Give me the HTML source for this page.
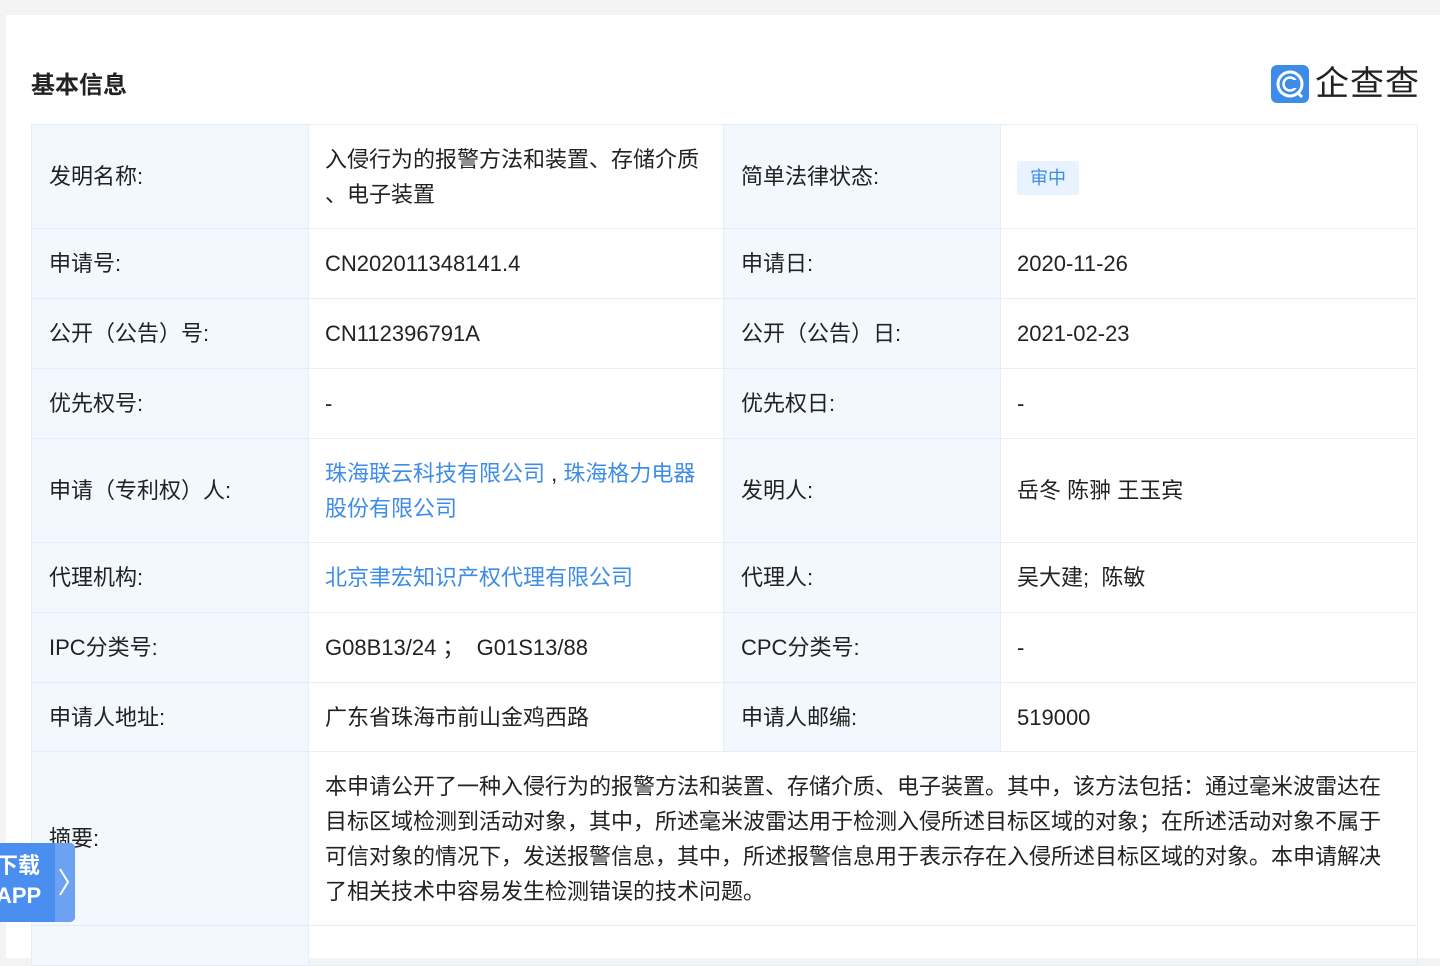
<!DOCTYPE html>
<html><head><meta charset="utf-8"><style>
*{margin:0;padding:0;box-sizing:border-box}
body{width:1440px;height:958px;background:#f3f3f3;font-family:"Liberation Sans","Noto Sans CJK SC",sans-serif;color:#333;overflow:hidden;position:relative}
.card{position:absolute;left:6px;top:15px;width:1434px;height:943px;background:#fff}
h2{position:absolute;left:31px;top:70px;font-size:24px;font-weight:bold;color:#222;line-height:32px}
.logo{position:absolute;left:1271px;top:65px;display:flex;align-items:center}
.logo .ic{width:38px;height:38px;background:#3d8ce8;border-radius:6px;position:relative}
.logo span{font-size:34px;color:#222;margin-left:6px;letter-spacing:1px;line-height:38px}
table{position:absolute;left:31px;top:124px;border-collapse:collapse;table-layout:fixed;width:1386px}
td{border:1px solid #e6eef5;font-size:22px;padding:0 16px;vertical-align:middle;line-height:35px;color:#222}
td.l{background:#f2f8fd;padding-left:17px}
a{color:#3d8ce8;text-decoration:none}
.badge{display:inline-block;background:#e8f3ff;color:#3d8ce8;font-size:18px;padding:0 13px;line-height:34px;border-radius:3px}
.app{position:absolute;left:0;top:843px;width:75px;height:79px;background:#4a8ef0;border-radius:0 5px 5px 0;color:#fff;font-weight:bold;font-size:22px;line-height:30px;overflow:hidden}
.app .r{position:absolute;left:55px;top:0;width:20px;height:79px;background:#6da2f3}
</style></head><body>
<div class="card"></div>
<h2>基本信息</h2>
<div class="logo"><div class="ic"><svg width="38" height="38" viewBox="0 0 38 38"><circle cx="19" cy="19" r="12" fill="none" stroke="#fff" stroke-width="3"/><circle cx="19" cy="19" r="6.5" fill="none" stroke="#fff" stroke-width="2.5"/><path d="M26 27 L31 32" stroke="#fff" stroke-width="3"/><rect x="19" y="15" width="8" height="8" fill="#3d8ce8"/></svg></div><span>企查查</span></div>
<table>
<colgroup><col style="width:277px"><col style="width:415px"><col style="width:277px"><col style="width:417px"></colgroup>
<tr style="height:104px"><td class="l">发明名称:</td><td style="padding-right:4px;white-space:nowrap">入侵行为的报警方法和装置、存储介质<br>、电子装置</td><td class="l">简单法律状态:</td><td><span class="badge">审中</span></td></tr>
<tr style="height:70px"><td class="l">申请号:</td><td>CN202011348141.4</td><td class="l">申请日:</td><td>2020-11-26</td></tr>
<tr style="height:70px"><td class="l">公开（公告）号:</td><td>CN112396791A</td><td class="l">公开（公告）日:</td><td>2021-02-23</td></tr>
<tr style="height:70px"><td class="l">优先权号:</td><td>-</td><td class="l">优先权日:</td><td>-</td></tr>
<tr style="height:104px"><td class="l">申请（专利权）人:</td><td><a>珠海联云科技有限公司</a> , <a>珠海格力电器股份有限公司</a></td><td class="l">发明人:</td><td>岳冬 陈翀 王玉宾</td></tr>
<tr style="height:70px"><td class="l">代理机构:</td><td><a>北京聿宏知识产权代理有限公司</a></td><td class="l">代理人:</td><td>吴大建;&nbsp; 陈敏</td></tr>
<tr style="height:70px"><td class="l">IPC分类号:</td><td>G08B13/24 ；&nbsp; G01S13/88</td><td class="l">CPC分类号:</td><td>-</td></tr>
<tr style="height:69px"><td class="l">申请人地址:</td><td>广东省珠海市前山金鸡西路</td><td class="l">申请人邮编:</td><td>519000</td></tr>
<tr style="height:174px"><td class="l">摘要:</td><td colspan="3">本申请公开了一种入侵行为的报警方法和装置、存储介质、电子装置。其中，该方法包括：通过毫米波雷达在目标区域检测到活动对象，其中，所述毫米波雷达用于检测入侵所述目标区域的对象；在所述活动对象不属于可信对象的情况下，发送报警信息，其中，所述报警信息用于表示存在入侵所述目标区域的对象。本申请解决了相关技术中容易发生检测错误的技术问题。</td></tr>
<tr style="height:40px"><td class="l"></td><td colspan="3"></td></tr>
</table>
<div class="app"><div class="r"><svg width="20" height="79"><path d="M5 26 L13 39 L5 52" fill="none" stroke="#fff" stroke-width="2"/></svg></div><div style="position:absolute;left:-4px;top:8px">下载</div><div style="position:absolute;left:-4px;top:38px">APP</div></div>
</body></html>
